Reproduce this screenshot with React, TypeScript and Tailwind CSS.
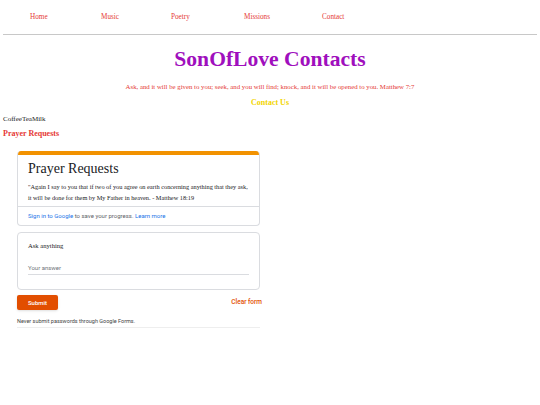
import React from 'react';

export default function App() {
    return (
        <div className="min-h-[405px] w-[540px] bg-white font-['Liberation_Serif',serif]">
            {/* top nav */}
            <nav className="flex h-[34px] items-center pl-[30px] text-[7.2px] text-[#e53935]">
                <a className="w-[71px]">Home</a>
                <a className="w-[70px]">Music</a>
                <a className="w-[73px]">Poetry</a>
                <a className="w-[78px]">Missions</a>
                <a>Contact</a>
            </nav>
            <div className="mx-[3px] h-px bg-[#c8c8c8]" />

            <header className="text-center">
                <h1 className="mt-[11px] text-[21.6px] font-bold leading-[26px] text-[#a00fbd]">SonOfLove Contacts</h1>
                <p className="mt-[10px] text-[6.8px] leading-[10px] text-[#e53935]">
                    Ask, and it will be given to you; seek, and you will find; knock, and it will be opened to you. Matthew 7:7
                </p>
                <h2 className="mt-[5px] text-[8px] font-bold leading-[12px] text-[#f2d500]">Contact Us</h2>
            </header>

            <p className="mt-[5px] pl-[3px] text-[7px] leading-[10px] text-[#222]">CoffeeTeaMilk</p>
            <h3 className="mt-[4px] pl-[3px] text-[8px] font-bold leading-[12px] text-[#e53935]">Prayer Requests</h3>

            {/* embedded form */}
            <div className="ml-[17px] mt-[11px] w-[243px]">
                <div className="overflow-hidden rounded-[4px] border border-[#dadce0] border-t-0">
                    <div className="h-[4px] bg-[#f29200]" />
                    <div className="px-[10px] pt-[4px] pb-[3px]">
                        <div className="text-[14px] leading-[20px] text-[#202124]">Prayer Requests</div>
                        <p className="mt-[2px] text-[6.3px] leading-[11px] text-[#202124]">
                            "Again I say to you that if two of you agree on earth concerning anything that they ask, it will be done for them by My Father in heaven. - Matthew 18:19
                        </p>
                    </div>
                    <div className="h-px bg-[#dadce0]" />
                    <div className="px-[10px] py-[4px] font-['Roboto',sans-serif] text-[6px] leading-[10px] text-[#5f6368]">
                        <span className="text-[#1a73e8]">Sign in to Google</span> to save your progress. <span className="text-[#1a73e8]">Learn more</span>
                    </div>
                </div>

                <div className="mt-[6px] rounded-[4px] border border-[#dadce0] px-[10px] pt-[8px] pb-[14px]">
                    <div className="text-[6.6px] leading-[10px] text-[#202124]">Ask anything</div>
                    <div className="mt-[12px] border-b border-[#dadce0] pb-[1px] font-['Roboto',sans-serif] text-[6px] leading-[10px] text-[#70757a]">
                        Your answer
                    </div>
                </div>

                <div className="mt-[5px] flex items-center justify-between font-['Roboto',sans-serif]">
                    <button className="h-[15px] w-[41px] rounded-[2px] bg-[#e24e00] text-[6px] font-medium text-white shadow-sm">Submit</button>
                    <span className="-mr-[2px] text-[6.5px] font-medium text-[#e24e00]">Clear form</span>
                </div>

                <div className="mt-[7px] border-b border-[#eeeeee] pb-[2px] font-['Roboto',sans-serif] text-[5.5px] leading-[8px] text-[#444]">
                    Never submit passwords through Google Forms.
                </div>
            </div>
        </div>
    );
}
